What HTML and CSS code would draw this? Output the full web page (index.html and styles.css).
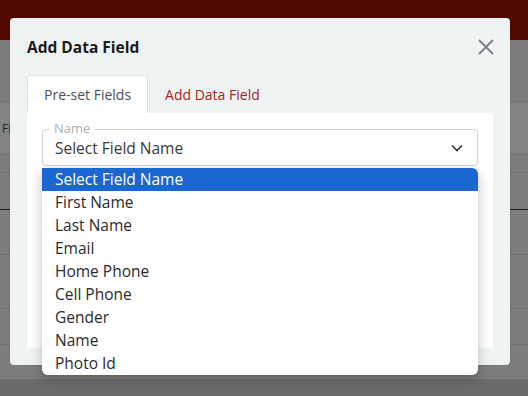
FILE: index.html
```html
<!DOCTYPE html>
<html lang="en">

<head>
    <meta charset="UTF-8">
    <meta name="viewport" content="width=device-width, initial-scale=1.0">
    <title>Add Data Field</title>
    <link rel="stylesheet" href="styles.css">
</head>

<body>
    <!-- page behind the modal (already dimmed) -->
    <div class="page">
        <div class="topbar"></div>
        <div class="row row-gap"></div>
        <div class="row row-head"><span class="cell-text">Fi</span></div>
        <div class="row row-sub"></div>
        <div class="row row-dark"></div>
        <div class="row row-a"></div>
        <div class="row row-b"></div>
        <div class="row row-c"></div>
        <div class="row row-d"></div>
        <div class="row row-end"></div>
    </div>

    <div class="modal">
        <div class="modal-header">
            <h2 class="modal-title">Add Data Field</h2>
            <span class="modal-close">
                <svg width="16" height="16" viewBox="0 0 16 16">
                    <path d="M1 1 L15 15 M15 1 L1 15" stroke="#7b7e80" stroke-width="1.8" fill="none" />
                </svg>
            </span>
        </div>

        <div class="tabs">
            <div class="tab active">Pre-set Fields</div>
            <div class="tab">Add Data Field</div>
        </div>

        <div class="panel">
            <div class="field">
                <span class="field-label">Name</span>
                <div class="select">
                    <span>Select Field Name</span>
                    <svg class="chevron" width="12" height="8" viewBox="0 0 12 8">
                        <path d="M1 1.5 L6 6.5 L11 1.5" stroke="#333" stroke-width="1.6" fill="none" />
                    </svg>
                </div>
                <div class="field-ghost"></div>
            </div>
        </div>
    </div>

    <ul class="dropdown">
        <li class="selected">Select Field Name</li>
        <li>First Name</li>
        <li>Last Name</li>
        <li>Email</li>
        <li>Home Phone</li>
        <li>Cell Phone</li>
        <li>Gender</li>
        <li>Name</li>
        <li>Photo Id</li>
    </ul>
</body>

</html>
```

FILE: styles.css
```css
body {
    margin: 0;
    padding: 0;
    font-family: 'Open Sans', 'Liberation Sans', sans-serif;
    background-color: #6c6c6c;
    width: 528px;
    height: 396px;
    overflow: hidden;
    position: relative;
}

.page {
    display: flex;
    flex-direction: column;
}

.topbar {
    height: 40px;
    background-color: #520a02;
}

.row {
    background-color: #7d7d7d;
    border-bottom: 1px solid #6f6f6f;
}

.row-gap {
    height: 61px;
}

.row-head {
    height: 52px;
    background-color: #838383;
    display: flex;
    align-items: center;
}

.cell-text {
    font-size: 12px;
    color: #2a2a2a;
    padding-left: 2px;
}

.row-sub {
    height: 17px;
}

.row-dark {
    height: 36px;
    border-bottom: 1px solid #1f1f1f;
}

.row-a {
    height: 44px;
}

.row-b {
    height: 53px;
}

.row-c {
    height: 35px;
}

.row-d {
    height: 34px;
}

.row-end {
    height: 20px;
    background-color: #6b6b6b;
    border-bottom: none;
}

/* modal */
.modal {
    position: absolute;
    top: 18px;
    left: 10px;
    width: 500px;
    height: 347px;
    background-color: #eff3f4;
    border-radius: 4px;
    box-shadow: 0 0 2px rgba(0, 0, 0, 0.2);
    box-sizing: border-box;
    padding: 0 17px;
}

.modal-header {
    height: 57px;
    display: flex;
    align-items: center;
    justify-content: space-between;
}

.modal-title {
    margin: 0;
    font-size: 15.5px;
    font-weight: 700;
    color: #1b1b1b;
}

.modal-close {
    display: flex;
    margin-right: -1px;
}

.tabs {
    display: flex;
    height: 38px;
}

.tab {
    padding: 0 16px;
    display: flex;
    align-items: center;
    font-size: 14px;
    color: #a8231a;
    border: 1px solid transparent;
    border-bottom: none;
    border-radius: 4px 4px 0 0;
}

.tab.active {
    background-color: #fff;
    border-color: #dde2e6;
    color: #4b5157;
}

.panel {
    background-color: #fff;
    height: 235px;
    box-sizing: border-box;
    border-radius: 0 4px 4px 4px;
    padding: 16px 15px 0;
}

.field {
    position: relative;
}

.field-label {
    position: absolute;
    top: -9px;
    left: 7px;
    padding: 0 5px;
    background-color: #fff;
    font-size: 13px;
    line-height: 16px;
    color: #b0b0b0;
}

.select {
    height: 37px;
    box-sizing: border-box;
    border: 1px solid #cfcfcf;
    border-radius: 4px;
    display: flex;
    align-items: center;
    justify-content: space-between;
    padding: 0 14px 0 12px;
    font-size: 15.5px;
    color: #3a3a3a;
}

.field-ghost {
    margin-top: 8px;
    height: 37px;
    border: 1px solid #cfcfcf;
    border-radius: 4px;
}

/* open dropdown menu */
.dropdown {
    position: absolute;
    top: 168px;
    left: 42px;
    width: 436px;
    margin: 0;
    padding: 0;
    list-style: none;
    background-color: #fff;
    border-radius: 0 6px 6px 6px;
    box-shadow: 0 4px 12px rgba(0, 0, 0, 0.25);
    overflow: hidden;
}

.dropdown li {
    height: 23px;
    line-height: 22px;
    padding-left: 13px;
    font-size: 15.5px;
    color: #2b2b2b;
}

.dropdown li.selected {
    background-color: #1a67d2;
    color: #fff;
}
```
